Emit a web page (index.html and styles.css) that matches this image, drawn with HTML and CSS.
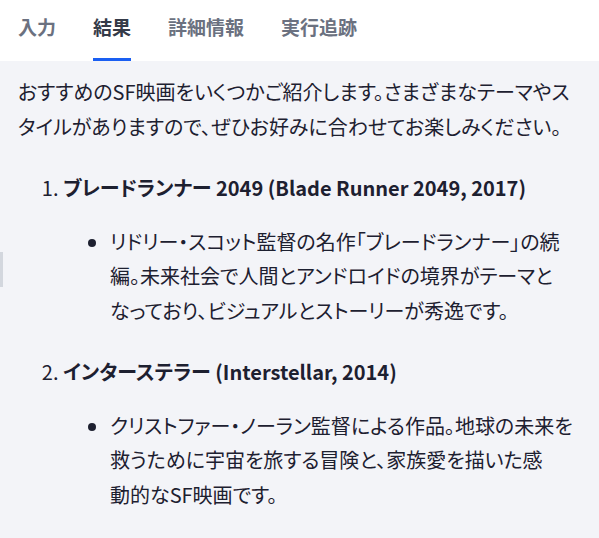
FILE: index.html
```html
<!DOCTYPE html>
<html lang="ja">
	<head>
		<meta charset="utf-8" />
		<title>結果</title>
		<link rel="stylesheet" href="styles.css">
	</head>
	<body>
		<nav class="tabs">
			<a class="tab">入力</a>
			<a class="tab activo">結果</a>
			<a class="tab">詳細情報</a>
			<a class="tab">実行追跡</a>
		</nav>
		<section class="resultado">
			<div class="asa"></div>
			<p>おすすめのSF映画をいくつかご紹介します。さまざまなテーマやス<br>タイルがありますので、ぜひお好みに合わせてお楽しみください。</p>
			<ol class="lista">
				<li>
					<strong>ブレードランナー 2049 (Blade Runner 2049, 2017)</strong>
					<ul>
						<li>リドリー・スコット監督の名作「ブレードランナー」の続<br>編。未来社会で人間とアンドロイドの境界がテーマと<br>なっており、ビジュアルとストーリーが秀逸です。</li>
					</ul>
				</li>
				<li>
					<strong>インターステラー (Interstellar, 2014)</strong>
					<ul>
						<li>クリストファー・ノーラン監督による作品。地球の未来を<br>救うために宇宙を旅する冒険と、家族愛を描いた感<br>動的なSF映画です。</li>
					</ul>
				</li>
			</ol>
		</section>
	</body>
</html>
```

FILE: styles.css
```css
html, body {
	margin: 0;
	height: 100%;
}
body {
	font-family: "Noto Sans CJK JP", "Noto Sans", sans-serif;
	font-feature-settings: "palt";
	color: #1d2030;
	background: #f3f4f8;
	overflow: hidden;
}
.tabs {
	display: flex;
	gap: 37px;
	padding-left: 18px;
	height: 61px;
	background: #ffffff;
}
.tab {
	font-size: 19px;
	font-weight: 600;
	line-height: 29px;
	padding: 12px 0 17px 0;
	color: #6b7180;
	border-bottom: 3px solid transparent;
	font-feature-settings: normal;
}
.tab.activo {
	color: #343a48;
	border-bottom-color: #1a5ff2;
}
.resultado {
	position: relative;
	padding: 14px 10px 0 18px;
	font-size: 20px;
	line-height: 34.5px;
	white-space: nowrap;
}
.asa {
	position: absolute;
	left: 0;
	top: 191px;
	width: 3px;
	height: 35px;
	background: #d3d7de;
}
.resultado p {
	margin: 0 0 27px 0;
}
.lista {
	margin: 0;
	padding-left: 45px;
}
.lista > li {
	margin-bottom: 27px;
}
.lista strong {
	font-weight: 700;
}
.lista ul {
	margin: 19px 0 0 0;
	padding-left: 47px;
	list-style: disc;
}
```
